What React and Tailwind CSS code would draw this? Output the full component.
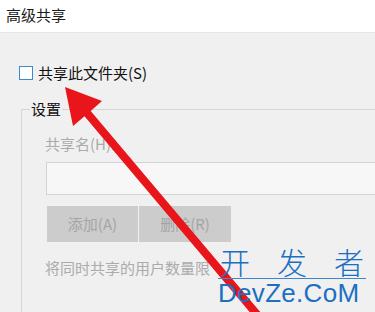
import React from 'react';

const cjk = { fontFamily: '"Noto Sans CJK SC", "Noto Sans", sans-serif' };

const Arrow = () => (
  <svg className="absolute left-0 top-0 pointer-events-none" width="375" height="312" viewBox="0 0 375 312">
    <polygon
      points="65,87 102,101 90.7,111.1 261.6,313.6 255.4,318.8 84.5,116.3 73,126"
      fill="#e8161b"
    />
  </svg>
);

const Watermark = () => (
  <div className="absolute left-[218px] top-[246px] w-[148px] text-[#1c6fc2]">
    <div className="flex justify-between text-[30px] leading-[30px] px-[2px] font-light" style={cjk}>
      <span>开</span>
      <span>发</span>
      <span>者</span>
    </div>
    <div className="h-px mt-[2px] bg-[#3a86cf]" />
    <div className="mt-[2px] text-[26px] leading-[24px] tracking-[0.3px] font-['Liberation_Sans',sans-serif]">
      DevZe.CoM
    </div>
  </div>
);

const App = () => {
  return (
    <div className="relative w-[375px] h-[312px] overflow-hidden bg-[#f0f0f0] text-[15px]" style={cjk}>
      {/* Title bar */}
      <div className="h-[33px] bg-white border-b border-[#e6e6e6] pl-[6px] pt-[5px] leading-[20px] text-[#1a1a1a]">
        高级共享
      </div>

      {/* Share checkbox */}
      <div className="flex items-center mt-[30px] ml-[19px] gap-[5px] h-[20px]">
        <div className="w-[14px] h-[14px] border-[1.5px] border-[#3b8ccb] bg-white" />
        <span className="leading-[20px] text-[#111111]">共享此文件夹(S)</span>
      </div>

      {/* Settings group */}
      <fieldset className="ml-[21px] mt-[16px] w-[400px] h-[260px] border border-[#d6d6d6] p-0">
        <legend className="ml-[8px] px-[1px] leading-[20px] text-[#111111]">设置</legend>
        <div className="pl-[23px] mt-[15px] leading-[20px] text-[#ababab]">共享名(H):</div>
        <div className="ml-[24px] mt-[8px] h-[33px] w-[360px] bg-[#f7f7f7] border border-[#d4d4d4]" />
        <div className="flex gap-px ml-[25px] mt-[11px]">
          <div className="w-[91px] h-[36px] bg-[#cccccc] flex items-center justify-center text-[#a4a4a4]">添加(A)</div>
          <div className="w-[92px] h-[36px] bg-[#cccccc] flex items-center justify-center text-[#a4a4a4]">删除(R)</div>
        </div>
        <div className="pl-[23px] mt-[16px] leading-[20px] text-[#ababab]">将同时共享的用户数量限</div>
      </fieldset>

      <Arrow />
      <Watermark />
    </div>
  );
};

export default App;
